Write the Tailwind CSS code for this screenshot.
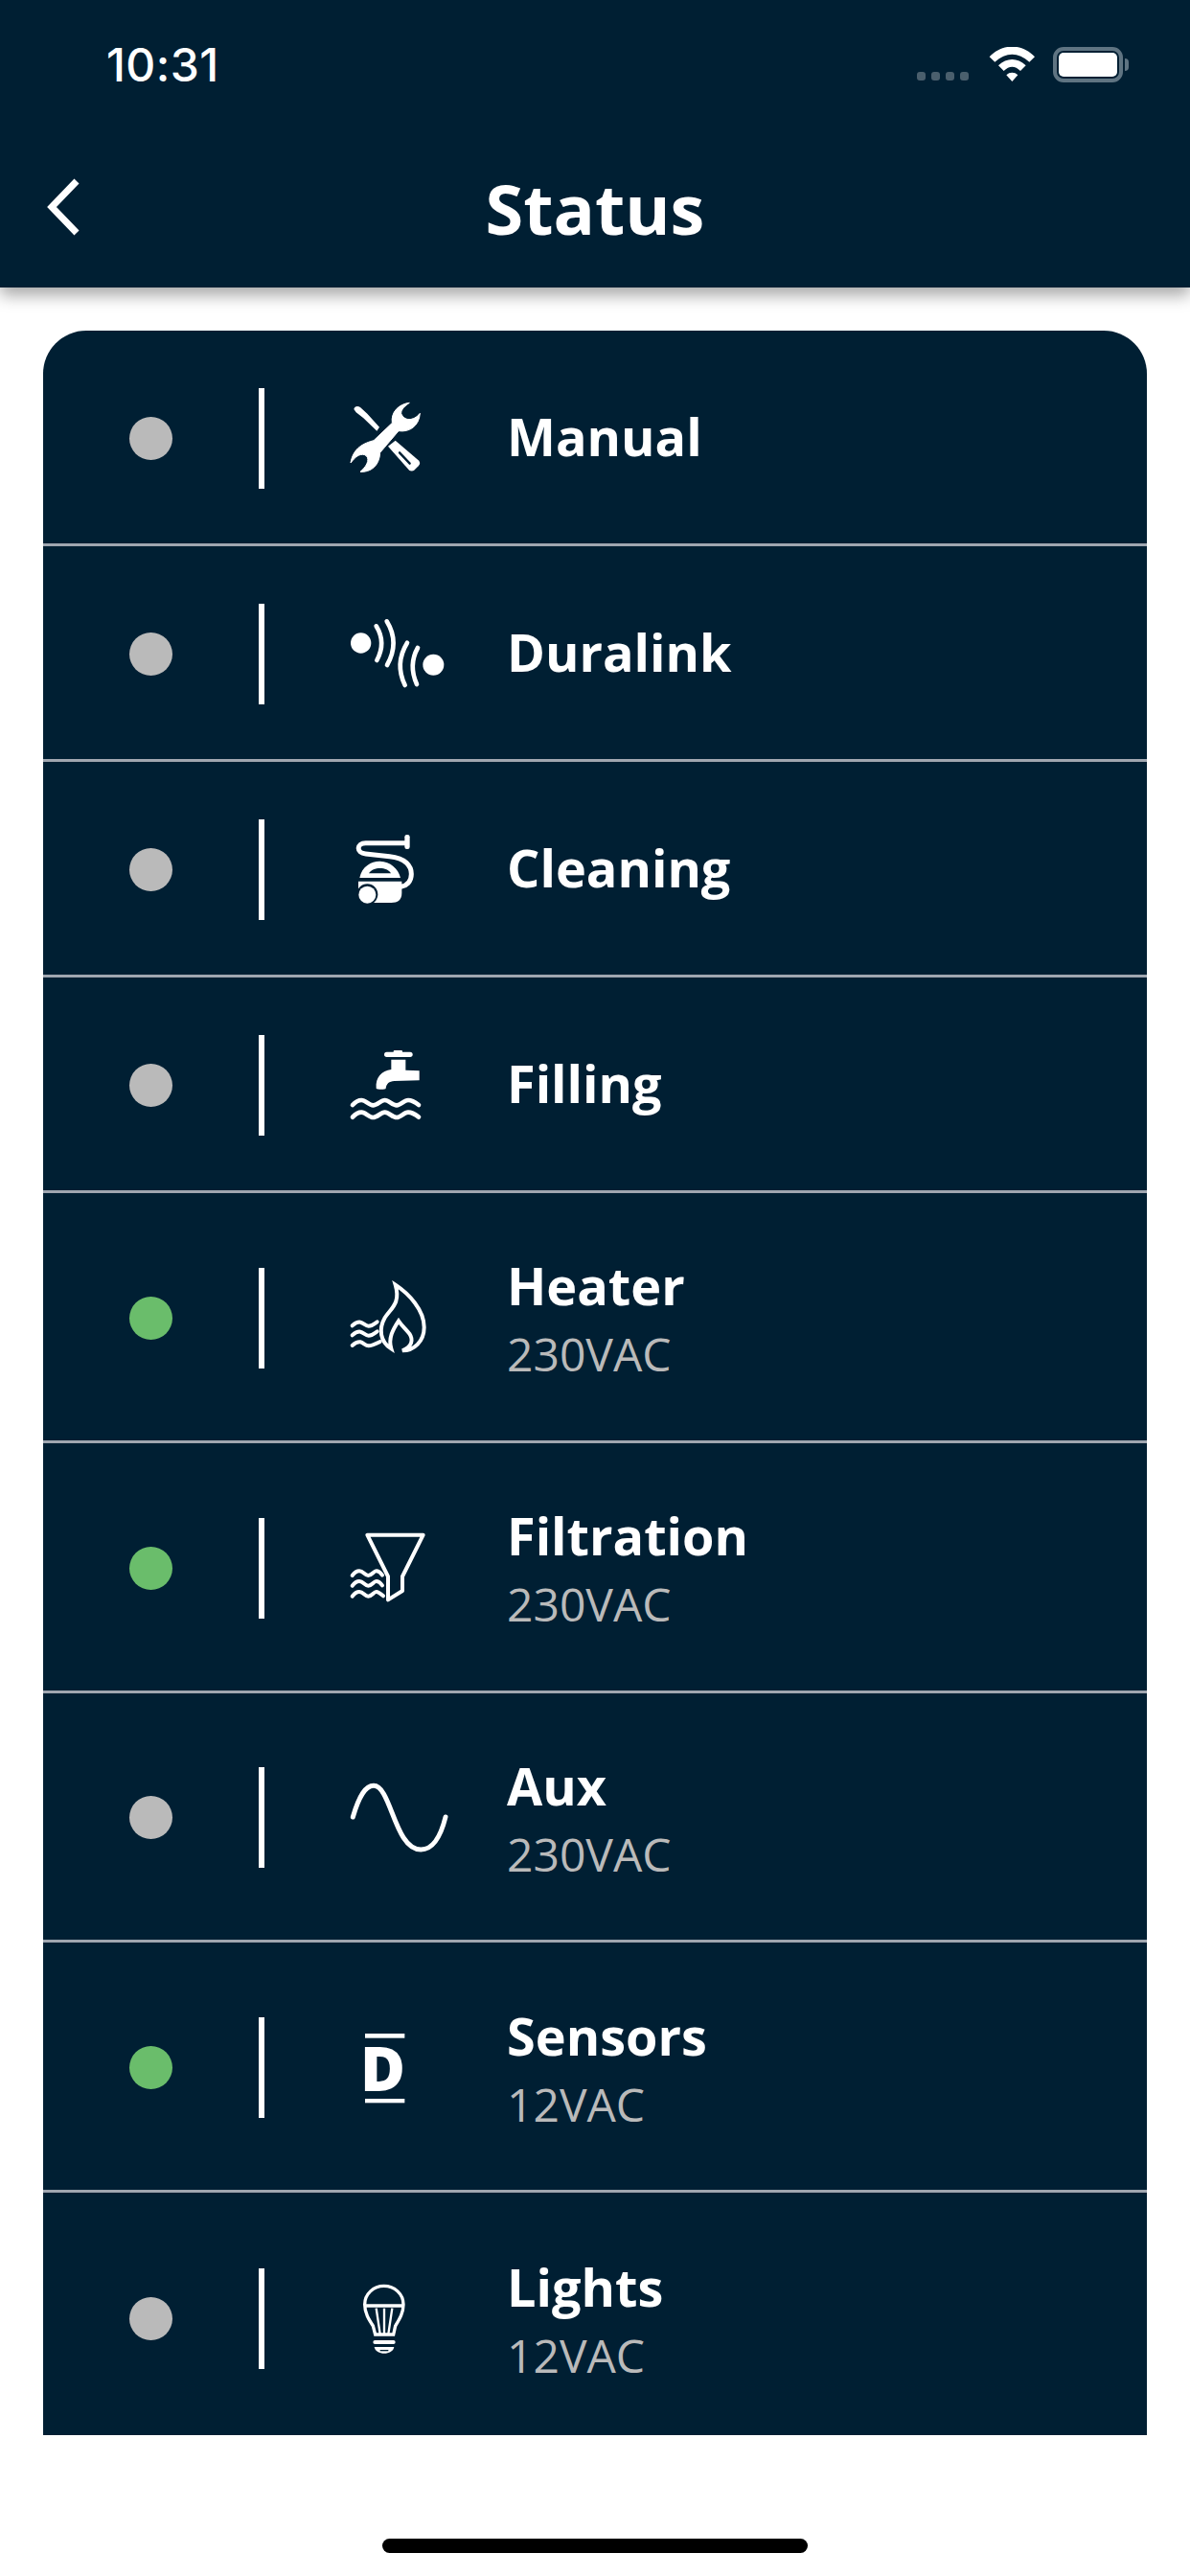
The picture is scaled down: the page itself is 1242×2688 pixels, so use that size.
<!DOCTYPE html>
<html lang="en">
<head>
<meta charset="utf-8">
<title>Status</title>
<script src="https://cdn.jsdelivr.net/npm/@tailwindcss/browser@4"></script>
</head>
<body class="bg-white font-['Open_Sans',sans-serif] w-[1242px] h-[2688px] overflow-hidden">
<header class="relative z-10 h-[300px] bg-[#001f33] shadow-[0_8px_16px_rgba(0,0,0,0.35)] text-white">
  <div class="h-[134px] pt-[49px] pl-[111px] pr-[64px] flex items-start">
    <span class="font-['Inter',sans-serif] font-medium text-[48px] leading-[37px] tracking-[0.4px]">10:31</span>
    <div class="ml-auto flex items-start">
      <div class="mt-[26px] flex gap-[6px]">
        <span class="w-[9px] h-[9px] rounded-[3px] bg-[#4a5f6d]"></span>
        <span class="w-[9px] h-[9px] rounded-[3px] bg-[#4a5f6d]"></span>
        <span class="w-[9px] h-[9px] rounded-[3px] bg-[#4a5f6d]"></span>
        <span class="w-[9px] h-[9px] rounded-[3px] bg-[#4a5f6d]"></span>
      </div>
      <svg class="ml-[21px] w-[48px] h-[37px]" viewBox="273 57 144 111" fill="#fff"><path d="M275 88C315 45 377 45 417 88L400 104C365 72 327 72 292 104Z"/><path d="M303 115C330 90 362 90 389 115L372 132C355 115 337 115 320 132Z"/><path d="M328 145C338 135 354 135 364 145L346 165Z"/></svg>
      <div class="ml-[19px] w-[73px] h-[37px] rounded-[11px] border-[4px] border-[#5f7482] p-[2px]"><div class="w-full h-full rounded-[5px] bg-white"></div></div>
      <div class="ml-[2px] mt-[12px] w-[4px] h-[13px] rounded-r-[4px] bg-[#5f7482]"></div>
    </div>
  </div>
  <div class="relative h-[166px] flex items-center justify-center">
    <svg class="absolute left-[45px] top-[48px] w-[42px] h-[66px]" viewBox="0 0 42 66" fill="none" stroke="#fff" stroke-width="7"><path d="M35 7 9 34 35 61"/></svg>
    <h1 class="text-[72px] leading-[98px] font-bold">Status</h1>
  </div>
</header>

<main class="mx-[45px] mt-[45px] h-[2196px] overflow-hidden rounded-t-[45px] bg-[#001f33]">

  <div class="h-[225px] pt-[3px] border-b-[3px] border-[#a0a6b0] flex items-center">
    <span class="ml-[90px] w-[45px] h-[45px] rounded-full bg-[#bababa]"></span>
    <span class="ml-[90px] w-[6px] h-[105px] bg-white"></span>
    <svg class="ml-[64px] w-[130px] h-[130px] shrink-0" viewBox="0 10 390 390" fill="#fff">
      <path d="M262 92C228 96 203 122 208 155L150 210C120 218 86 232 78 280C92 262 105 250 122 255C138 262 135 285 108 308C140 310 168 290 170 248L228 180C262 185 292 165 295 125C275 150 245 150 236 125C236 112 248 102 262 92Z" stroke="#fff" stroke-width="3"/>
      <path d="M88 112C90 102 100 100 108 106L130 126 168 168 160 180 118 140 95 122Z"/>
      <path d="M195 228 218 210 290 272C296 278 296 284 290 290L278 302C272 307 266 307 260 302Z"/>
      <path d="M231 248 263 282" stroke="#001f33" stroke-width="7" stroke-linecap="round"/>
    </svg>
    <span class="ml-[59px] mb-[4px] text-[54px] leading-[71px] font-bold text-white">Manual</span>
  </div>

  <div class="h-[225px] pt-[3px] border-b-[3px] border-[#a0a6b0] flex items-center">
    <span class="ml-[90px] w-[45px] h-[45px] rounded-full bg-[#bababa]"></span>
    <span class="ml-[90px] w-[6px] h-[105px] bg-white"></span>
    <svg class="ml-[64px] w-[130px] h-[130px] shrink-0" viewBox="0 682 390 390" fill="#fff">
      <circle cx="110" cy="841" r="32"/><circle cx="337" cy="909" r="33"/>
      <g fill="none" stroke="#fff" stroke-width="14" stroke-linecap="round"><path d="M158 788Q190 840 160 895"/><path d="M191 773Q232 840 192 910"/><path d="M255 840Q215 905 248 973"/><path d="M288 856Q258 910 285 970"/></g>
    </svg>
    <span class="ml-[59px] mb-[4px] text-[54px] leading-[71px] font-bold text-white">Duralink</span>
  </div>

  <div class="h-[225px] pt-[3px] border-b-[3px] border-[#a0a6b0] flex items-center">
    <span class="ml-[90px] w-[45px] h-[45px] rounded-full bg-[#bababa]"></span>
    <span class="ml-[90px] w-[6px] h-[105px] bg-white"></span>
    <svg class="ml-[64px] w-[130px] h-[130px] shrink-0" viewBox="0 8 390 390" fill="#fff">
      <path d="M255 118H125C95 118 95 150 125 152L200 160C250 165 268 190 268 215C268 240 252 252 235 255" fill="none" stroke="#fff" stroke-width="15"/>
      <rect x="247" y="92" width="16" height="45" rx="7"/>
      <path d="M106 227C113 190 145 174 170 175C202 176 227 198 234 227Z"/>
      <path d="M135 213C148 192 192 192 204 213Z" fill="#001f33"/>
      <path d="M102 238H238V275C238 296 225 305 205 305H120C105 305 102 290 102 275Z"/>
      <circle cx="130" cy="279" r="33" fill="#001f33"/>
      <circle cx="130" cy="280" r="27"/>
    </svg>
    <span class="ml-[59px] mb-[4px] text-[54px] leading-[71px] font-bold text-white">Cleaning</span>
  </div>

  <div class="h-[225px] pt-[3px] border-b-[3px] border-[#a0a6b0] flex items-center">
    <span class="ml-[90px] w-[45px] h-[45px] rounded-full bg-[#bababa]"></span>
    <span class="ml-[90px] w-[6px] h-[105px] bg-white"></span>
    <svg class="ml-[64px] w-[130px] h-[130px] shrink-0" viewBox="0 682 390 390" fill="#fff">
      <rect x="183" y="771" width="89" height="16" rx="8"/><rect x="212" y="766" width="28" height="8" rx="3"/>
      <path d="M205 795H250V828L293 830V860L215 862C198 863 190 870 188 885C188 889 160 889 158 885C155 850 175 830 205 826Z"/>
      <g fill="none" stroke="#fff" stroke-width="14" stroke-linecap="round"><path d="M84 937C95 925 105 922 112 922C125 922 135 938 148 938C162 938 172 922 185 922C198 922 208 938 222 938C235 938 245 922 258 922C270 922 282 930 291 937"/><path d="M84 975C95 963 105 960 112 960C125 960 135 976 148 976C162 976 172 960 185 960C198 960 208 976 222 976C235 976 245 960 258 960C270 960 282 968 291 975"/></g>
    </svg>
    <span class="ml-[59px] mb-[4px] text-[54px] leading-[71px] font-bold text-white">Filling</span>
  </div>

  <div class="h-[260.75px] pt-[3px] border-b-[3px] border-[#a0a6b0] flex items-center">
    <span class="ml-[90px] w-[45px] h-[45px] rounded-full bg-[#6abd6b]"></span>
    <span class="ml-[90px] w-[6px] h-[105px] bg-white"></span>
    <svg class="ml-[64px] w-[130px] h-[130px] shrink-0" viewBox="0 30 390 390" fill="none" stroke="#fff">
      <path d="M205 322C170 300 165 260 185 225C205 195 235 180 218 122C260 150 308 200 308 255C308 300 275 328 240 328C270 315 275 295 262 275C250 260 238 250 228 235C210 262 195 290 205 322Z" stroke-width="12" stroke-linejoin="miter"/>
      <g stroke-width="12" stroke-linecap="round"><path d="M83 250C92 242 100 238 108 239C118 241 124 251 134 251C145 251 152 244 161 238"/><path d="M83 280C92 272 100 268 108 269C118 271 124 281 134 281C145 281 152 274 161 268"/><path d="M83 312C92 304 100 300 108 301C118 303 124 313 134 313C145 313 158 306 170 300"/></g>
    </svg>
    <div class="ml-[59px] pt-[4px]">
      <p class="text-[54px] leading-[71px] font-bold text-white">Heater</p>
      <p class="text-[48px] leading-[71px] font-normal text-[#bababa]">230VAC</p>
    </div>
  </div>

  <div class="h-[260.75px] pt-[3px] border-b-[3px] border-[#a0a6b0] flex items-center">
    <span class="ml-[90px] w-[45px] h-[45px] rounded-full bg-[#6abd6b]"></span>
    <span class="ml-[90px] w-[6px] h-[105px] bg-white"></span>
    <svg class="ml-[64px] w-[130px] h-[130px] shrink-0" viewBox="0 3 390 390" fill="none" stroke="#fff">
      <path d="M130 95H305L240 225V270L195 298V225Z" stroke-width="12" stroke-linejoin="round"/>
      <g stroke-width="12" stroke-linecap="round"><path d="M83 222C90 213 98 208 105 208C118 208 122 222 133 222C145 222 150 208 158 208C165 208 172 214 177 221"/><path d="M83 254C90 245 98 240 105 240C118 240 122 254 133 254C145 254 150 240 158 240C165 240 172 246 177 253"/><path d="M83 287C90 278 98 273 105 273C118 273 122 287 133 287C145 287 150 273 158 273C165 273 172 279 180 286"/></g>
    </svg>
    <div class="ml-[59px] pt-[4px]">
      <p class="text-[54px] leading-[71px] font-bold text-white">Filtration</p>
      <p class="text-[48px] leading-[71px] font-normal text-[#bababa]">230VAC</p>
    </div>
  </div>

  <div class="h-[260.75px] pt-[3px] border-b-[3px] border-[#a0a6b0] flex items-center">
    <span class="ml-[90px] w-[45px] h-[45px] rounded-full bg-[#bababa]"></span>
    <span class="ml-[90px] w-[6px] h-[105px] bg-white"></span>
    <svg class="ml-[64px] w-[130px] h-[130px] shrink-0" viewBox="0 6 390 390" fill="none" stroke="#fff" stroke-width="15" stroke-linecap="round">
      <path d="M85 198C105 130 125 100 150 100C205 100 215 300 298 300C335 300 360 258 375 198"/>
    </svg>
    <div class="ml-[59px] pt-[4px]">
      <p class="text-[54px] leading-[71px] font-bold text-white">Aux</p>
      <p class="text-[48px] leading-[71px] font-normal text-[#bababa]">230VAC</p>
    </div>
  </div>

  <div class="h-[260.75px] pt-[3px] border-b-[3px] border-[#a0a6b0] flex items-center">
    <span class="ml-[90px] w-[45px] h-[45px] rounded-full bg-[#6abd6b]"></span>
    <span class="ml-[90px] w-[6px] h-[105px] bg-white"></span>
    <svg class="ml-[64px] w-[130px] h-[130px] shrink-0" viewBox="0 6 390 390" fill="#fff">
      <rect x="123" y="93" width="124" height="14"/>
      <text x="108" y="273" font-family="Open Sans" font-weight="800" font-size="192">D</text>
      <rect x="123" y="297" width="124" height="13"/>
    </svg>
    <div class="ml-[59px] pt-[4px]">
      <p class="text-[54px] leading-[71px] font-bold text-white">Sensors</p>
      <p class="text-[48px] leading-[71px] font-normal text-[#bababa]">12VAC</p>
    </div>
  </div>

  <div class="h-[260.75px] pt-[3px] flex items-center">
    <span class="ml-[90px] w-[45px] h-[45px] rounded-full bg-[#bababa]"></span>
    <span class="ml-[90px] w-[6px] h-[105px] bg-white"></span>
    <svg class="ml-[64px] w-[130px] h-[130px] shrink-0" viewBox="-60 9 390 390" fill="none" stroke="#fff">
      <path d="M95 252L88 225C75 205 62 185 62 158C62 125 90 100 122 100C155 100 183 125 183 158C183 185 170 205 158 225L152 252Z" stroke-width="10"/>
      <path d="M62 162H183" stroke-width="10"/>
      <path d="M98 170 110 250M123 170V250M148 170 136 250" stroke-width="7"/>
      <rect x="88" y="270" width="70" height="12" rx="6" fill="#fff" stroke="none"/>
      <path d="M92 291H154C150 318 96 318 92 291Z" fill="#fff" stroke="none"/>
      <path d="M110 302H136" stroke="#001f33" stroke-width="4"/>
    </svg>
    <div class="ml-[59px] pt-[4px]">
      <p class="text-[54px] leading-[71px] font-bold text-white">Lights</p>
      <p class="text-[48px] leading-[71px] font-normal text-[#bababa]">12VAC</p>
    </div>
  </div>
</main>

<div class="mx-auto mt-[108px] w-[444px] h-[15px] rounded-full bg-black"></div>
</body>
</html>
